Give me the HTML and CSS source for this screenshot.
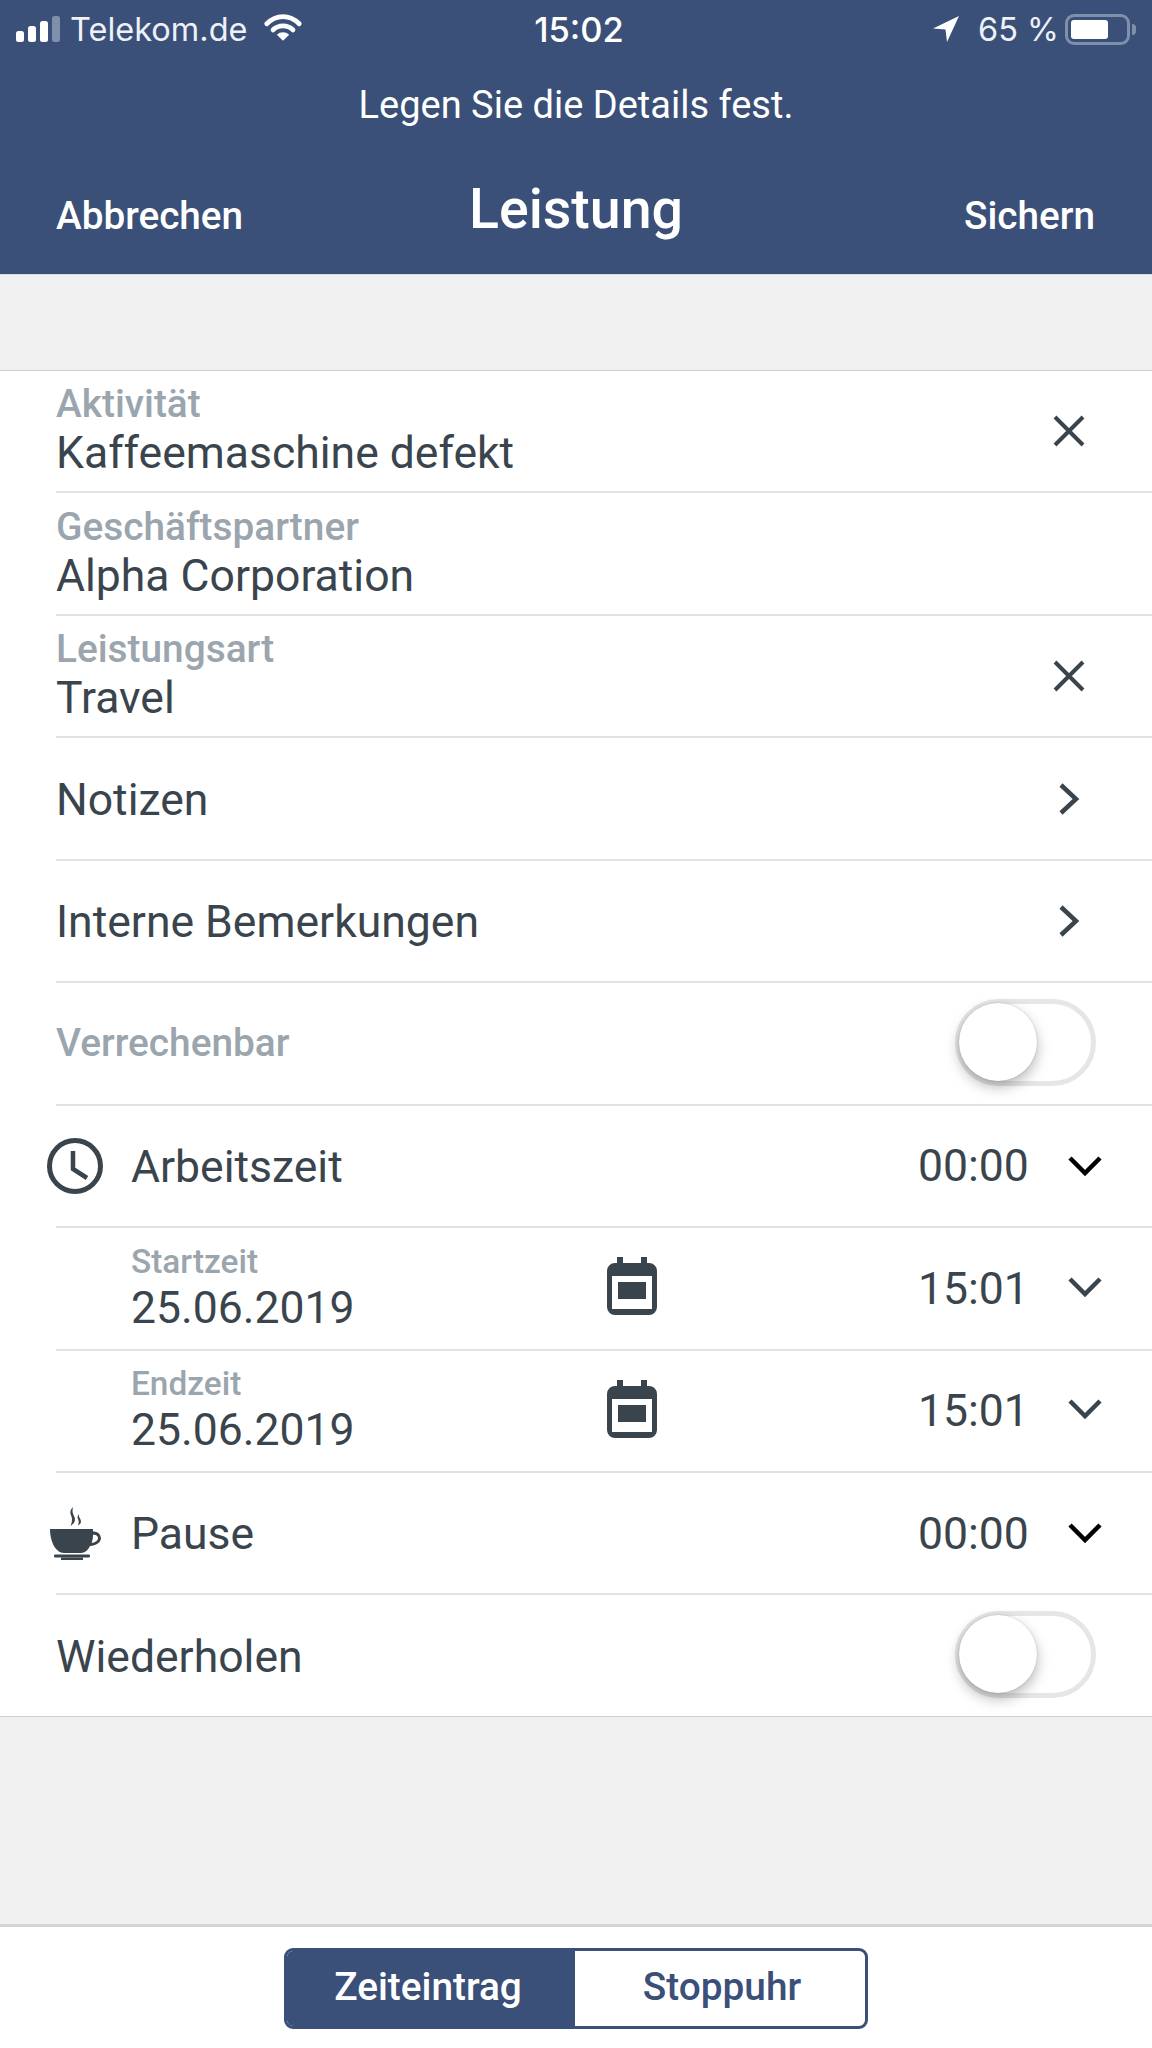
FILE: index.html
```
<!DOCTYPE html>
<html lang="de">
<head>
<meta charset="utf-8">
<title>Leistung</title>
<link rel="stylesheet" href="styles.css">
</head>
<body>
<div class="page">
  <header class="head">
    <div class="status">
      <div class="status-left">
        <svg class="signal" viewBox="0 0 46 26"><rect x="0" y="15" width="8" height="11" rx="2.5" fill="#fff"/><rect x="12" y="10" width="8" height="16" rx="2.5" fill="#fff"/><rect x="24" y="5" width="8" height="21" rx="2.5" fill="#fff"/><rect x="36" y="0" width="8" height="26" rx="2.5" fill="#7f90ad"/></svg>
        <span class="carrier">Telekom.de</span>
        <svg class="wifi" viewBox="0 0 40 28"><path d="M3 10C13 0 27 0 37 10" fill="none" stroke="#fff" stroke-width="5" stroke-linecap="round"/><path d="M9.500 16.500c6-5.500 15-5.500 21 0" fill="none" stroke="#fff" stroke-width="5" stroke-linecap="round"/><path d="M13.500 21.500c3.800-3.500 9.200-3.500 13 0L20 28z" fill="#fff"/></svg>
      </div>
      <div class="clock-text">15:02</div>
      <div class="status-right">
        <svg class="loc" viewBox="0 0 28 28"><path d="M27 1L1 13.500l12.500 1L15 27z" fill="#fff"/></svg>
        <span class="batt-text">65 %</span>
        <div class="battery"><div class="battery-fill"></div></div>
        <div class="battery-nub"></div>
      </div>
    </div>
    <div class="subtitle">Legen Sie die Details fest.</div>
    <div class="nav">
      <span class="nav-btn">Abbrechen</span>
      <span class="title">Leistung</span>
      <span class="nav-btn nav-right">Sichern</span>
    </div>
  </header>

  <main class="form">
    <div class="row">
      <div class="stack"><span class="label">Aktivität</span><span class="value">Kaffeemaschine defekt</span></div>
      <svg class="action" viewBox="0 0 34 34"><path d="M3 3l28 28M31 3L3 31" fill="none" stroke="#3a444d" stroke-width="4"/></svg>
    </div>
    <div class="row">
      <div class="stack"><span class="label">Geschäftspartner</span><span class="value">Alpha Corporation</span></div>
    </div>
    <div class="row">
      <div class="stack"><span class="label">Leistungsart</span><span class="value">Travel</span></div>
      <svg class="action" viewBox="0 0 34 34"><path d="M3 3l28 28M31 3L3 31" fill="none" stroke="#3a444d" stroke-width="4"/></svg>
    </div>
    <div class="row">
      <span class="value">Notizen</span>
      <svg class="action" viewBox="0 0 34 34"><path d="M9 3l15 14L9 31" fill="none" stroke="#3a444d" stroke-width="4.500"/></svg>
    </div>
    <div class="row">
      <span class="value">Interne Bemerkungen</span>
      <svg class="action" viewBox="0 0 34 34"><path d="M9 3l15 14L9 31" fill="none" stroke="#3a444d" stroke-width="4.500"/></svg>
    </div>
    <div class="row">
      <span class="label">Verrechenbar</span>
      <div class="toggle"><div class="knob"></div></div>
    </div>
    <div class="row">
      <svg class="lead-icon" viewBox="0 0 58 58"><circle cx="29" cy="29" r="25.500" fill="none" stroke="#3a444d" stroke-width="5"/><path d="M27 14v18l14 9" fill="none" stroke="#3a444d" stroke-width="4.500"/></svg>
      <span class="value">Arbeitszeit</span>
      <span class="time">00:00</span>
      <svg class="chev" viewBox="0 0 34 22"><path d="M2 3l15 15L32 3" fill="none" stroke="#000" stroke-width="4.500"/></svg>
    </div>
    <div class="row">
      <div class="stack date"><span class="label small">Startzeit</span><span class="value">25.06.2019</span></div>
      <svg class="cal" viewBox="0 0 50 58"><path d="M10 0h6v6h18V0h6v6h2a8 8 0 0 1 8 8v36a8 8 0 0 1-8 8H8a8 8 0 0 1-8-8V14a8 8 0 0 1 8-8h2z" fill="#3a444d"/><rect x="5" y="19" width="40" height="33" fill="#fff"/><rect x="11" y="25" width="28" height="17" fill="#3a444d"/></svg>
      <span class="time">15:01</span>
      <svg class="chev chev-up" viewBox="0 0 34 22"><path d="M2 3l15 15L32 3" fill="none" stroke="#3a444d" stroke-width="4.500"/></svg>
    </div>
    <div class="row">
      <div class="stack date"><span class="label small">Endzeit</span><span class="value">25.06.2019</span></div>
      <svg class="cal" viewBox="0 0 50 58"><path d="M10 0h6v6h18V0h6v6h2a8 8 0 0 1 8 8v36a8 8 0 0 1-8 8H8a8 8 0 0 1-8-8V14a8 8 0 0 1 8-8h2z" fill="#3a444d"/><rect x="5" y="19" width="40" height="33" fill="#fff"/><rect x="11" y="25" width="28" height="17" fill="#3a444d"/></svg>
      <span class="time">15:01</span>
      <svg class="chev chev-up" viewBox="0 0 34 22"><path d="M2 3l15 15L32 3" fill="none" stroke="#3a444d" stroke-width="4.500"/></svg>
    </div>
    <div class="row">
      <svg class="lead-icon" viewBox="0 0 58 58"><path d="M27 3c-4 4-2.500 7-1.500 9.500s.500 6-1 9.500c4.500-3 5.500-6 3.500-10s-1.500-6-1-9zM33 10c-2.500 3-1 4.500-.500 6.500s0 3.500-.500 5c3.500-2 3.500-4 2-7s-1.200-3-1-4.500z" fill="#3a444d"/><path d="M4 25h43v2.500a7 7 0 0 1 8 6.500c0 4.500-5 7.500-11 8-2 4-5 7-9 7H18C10 49 4 38 4 25zm43 6c0 3-.500 5.500-1.300 8 3.800-.500 6.300-2.500 6.300-5 0-2.500-3-4-5-3z" fill="#3a444d"/><rect x="8" y="50.500" width="36" height="3" rx="1.200" fill="#3a444d"/><rect x="15" y="53.500" width="22" height="2.500" fill="#3a444d"/></svg>
      <span class="value">Pause</span>
      <span class="time">00:00</span>
      <svg class="chev" viewBox="0 0 34 22"><path d="M2 3l15 15L32 3" fill="none" stroke="#000" stroke-width="4.500"/></svg>
    </div>
    <div class="row last">
      <span class="value">Wiederholen</span>
      <div class="toggle"><div class="knob"></div></div>
    </div>
  </main>

  <div class="spacer"></div>

  <footer class="foot">
    <div class="segment">
      <span class="seg seg-on">Zeiteintrag</span>
      <span class="seg seg-off">Stoppuhr</span>
    </div>
  </footer>
</div>
</body>
</html>
```
FILE: styles.css
```
* { box-sizing: border-box; }
html, body { margin: 0; padding: 0; }
body { font-family: Roboto, "Noto Sans", sans-serif; color: #3a444d; background: #f0f0f0; }
.page { width: 1152px; height: 2048px; display: flex; flex-direction: column; overflow: hidden; }

.head { height: 275px; background: #3a5079; color: #fff; flex: none; border-bottom: 1px solid #d5dcea; }
.status { height: 58px; display: grid; grid-template-columns: 1fr auto 1fr; align-items: center; font-family: Inter, "Liberation Sans", sans-serif; }
.status-left { display: flex; align-items: center; padding-left: 16px; }
.signal { width: 46px; height: 26px; }
.carrier { font-size: 32.500px; margin-left: 8px; color: #eef1f6; }
.wifi { width: 38px; height: 27px; margin-left: 17px; margin-top: -3px; }
.clock-text { font-size: 34.500px; font-weight: 500; padding-left: 6px; }
.status-right { display: flex; align-items: center; justify-content: flex-end; padding-right: 16px; }
.loc { width: 28px; height: 28px; margin-right: -2px; }
.batt-text { font-size: 32.500px; margin-left: 20px; color: #eef1f6; }
.battery { width: 65px; height: 31px; border: 3px solid #7f90ad; border-radius: 9px; margin-left: 6px; padding: 3px; }
.battery-fill { width: 37px; height: 100%; background: #fff; border-radius: 3px; }
.battery-nub { width: 4px; height: 11px; background: #7f90ad; border-radius: 0 4px 4px 0; margin-left: 2px; }

.subtitle { text-align: center; font-size: 38px; line-height: 44px; margin-top: 25px; }
.nav { display: grid; grid-template-columns: 1fr auto 1fr; align-items: center; padding: 0 56px; margin-top: 51px; }
.nav-btn { font-size: 38.700px; font-weight: 500; padding-top: 10px; }
.nav-right { text-align: right; margin-right: 1px; }
.title { font-size: 55.500px; font-weight: 500; line-height: 64px; }

.form { margin-top: 95px; background: #fff; border-top: 1px solid #cfcfcf; border-bottom: 1px solid #cfcfcf; flex: none; padding-left: 56px; }
.row { height: 122.450px; display: flex; align-items: center; border-bottom: 2px solid #e2e2e2; position: relative; }
.row.last { border-bottom: none; height: 121px; }
.stack { display: flex; flex-direction: column; }
.label { font-size: 38.800px; font-weight: 500; line-height: 42px; color: #9aa5ae; }
.label.small { font-size: 33.400px; line-height: 37px; }
.value { font-size: 44.500px; line-height: 51px; color: #3a444d; padding-top: 3px; }
.action { width: 34px; height: 34px; margin-left: auto; margin-right: 66px; }
.toggle { width: 141px; height: 87px; margin-left: auto; margin-right: 56px; margin-bottom: 2px; border: 5px solid #e6e6e6; border-radius: 44px; position: relative; }
.knob { width: 78px; height: 78px; margin-top: -1px; margin-left: -1px; background: #fff; border-radius: 50%; box-shadow: 0 6px 14px rgba(0,0,0,.28), 0 0 2px rgba(0,0,0,.2); }
.lead-icon { width: 58px; height: 58px; margin-left: -10px; margin-right: 27px; flex: none; }
.date { margin-left: 75px; width: 476px; }
.cal { width: 50px; height: 58px; flex: none; margin-bottom: 4px; }
.time { font-size: 44.500px; line-height: 51px; margin-left: auto; width: 150px; padding-top: 2px; }
.chev { width: 34px; height: 22px; margin-right: 50px; flex: none; }
.chev-up { margin-bottom: 3px; }

.spacer { flex: 1; }
.foot { height: 124px; flex: none; background: #fff; border-top: 3px solid #d4d4d4; display: flex; justify-content: center; padding-top: 21px; }
.segment { width: 584px; height: 81px; display: flex; border: 3px solid #3a5079; border-radius: 9px; overflow: hidden; margin-left: -1px; }
.seg { flex: 1; display: flex; align-items: center; justify-content: center; font-size: 38.800px; font-weight: 500; color: #3a5079; padding-bottom: 4px; }
.seg-on { background: #3a5079; color: #fff; flex: none; width: 288px; padding-right: 5px; }
.seg-off { padding-left: 5px; }
```
